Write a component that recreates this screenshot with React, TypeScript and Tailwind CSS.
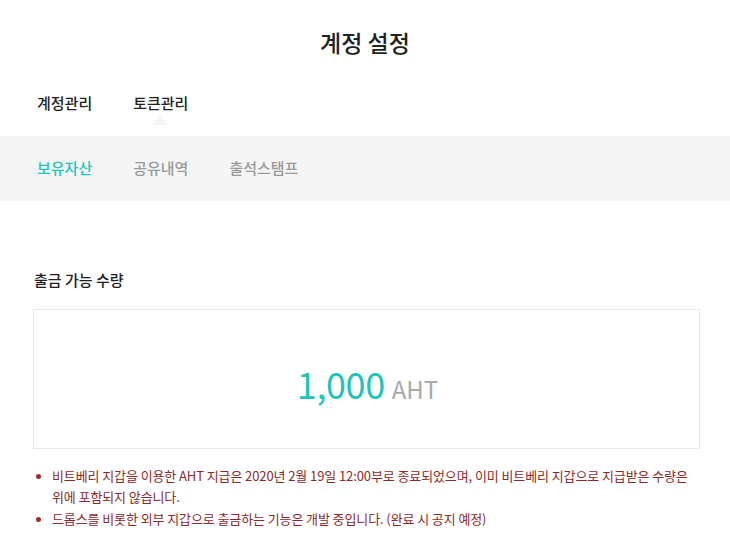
import React from "react";

const font = { fontFamily: '"Noto Sans CJK KR", "Noto Sans", sans-serif' };

export default function App() {
  const notices = [
    "비트베리 지갑을 이용한 AHT 지급은 2020년 2월 19일 12:00부로 종료되었으며, 이미 비트베리 지갑으로 지급받은 수량은 위에 포함되지 않습니다.",
    "드롭스를 비롯한 외부 지갑으로 출금하는 기능은 개발 중입니다. (완료 시 공지 예정)",
  ];

  return (
    <main className="min-h-screen w-[730px] bg-white text-[#222]" style={font}>
      <h1 className="pt-[25px] text-center text-[23px] font-medium leading-[34px]">
        계정 설정
      </h1>

      <nav className="mt-[33px] flex gap-[41px] px-[37px] text-[15px] font-medium leading-[22px]">
        <span>계정관리</span>
        <span className="relative">
          토큰관리
          <span className="absolute left-[18px] top-[24px] h-0 w-0 border-x-[9px] border-b-[9px] border-x-transparent border-b-[#f5f5f5]" />
        </span>
      </nav>

      <div className="mt-[22px] flex h-[65px] items-center gap-[41px] bg-[#f5f5f5] px-[37px] text-[15px] font-medium">
        <span className="text-[#1fc4bb]">보유자산</span>
        <span className="text-[#999]">공유내역</span>
        <span className="text-[#999]">출석스탬프</span>
      </div>

      <section className="pl-[33px] pr-[30px] pt-[68px]">
        <h2 className="px-px text-[15px] font-medium leading-[22px]">출금 가능 수량</h2>
        <div className="mt-[18px] flex h-[140px] items-center justify-center border border-[#e8e8e8]">
          <div className="flex items-baseline gap-[7px] pt-[8px] pl-[2px]">
            <span className="text-[36px] tracking-[-0.4px] leading-none text-[#1fc4bb]">1,000</span>
            <span className="text-[24px] leading-none text-[#aaa]">AHT</span>
          </div>
        </div>

        <ul className="mt-[16px] flex flex-col gap-[1px] pr-[6px] text-[13px] tracking-[-0.1px] leading-[21px] text-[#8b2a2a]">
          {notices.map((n) => (
            <li key={n} className="flex">
              <span className="flex h-[21px] w-[19px] shrink-0 items-center justify-start pl-[3px] pt-px">
                <span className="h-[5px] w-[5px] rounded-full bg-[#a32a2a]" />
              </span>
              <span>{n}</span>
            </li>
          ))}
        </ul>
      </section>
    </main>
  );
}
